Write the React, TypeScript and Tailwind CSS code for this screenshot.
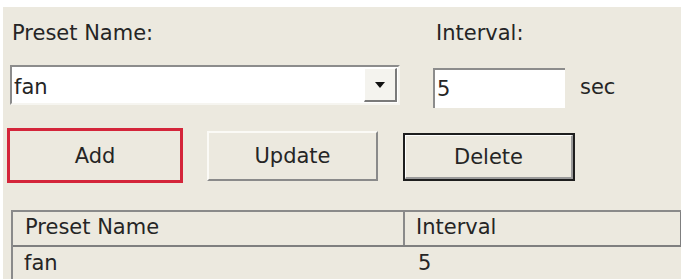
import { ReactNode } from "react";

const font = "font-['DejaVu_Sans',sans-serif] text-[21px] leading-[24px] text-[#252525]";

function Label({ children, className = "" }: { children: ReactNode; className?: string }) {
  return <div className={`${className}`}>{children}</div>;
}

export default function App() {
  return (
    <div className={`w-[687px] h-[279px] bg-white overflow-hidden ${font}`}>
      <div className="ml-[3px] mt-[7px] w-[678px] h-[272px] bg-[#ECE9DF] pl-[7px] overflow-hidden">
        {/* labels */}
        <div className="flex mt-[14px] h-[24px]">
          <Label className="w-[423px] pl-[2px]">Preset Name:</Label>
          <Label className="pl-[3px]">Interval:</Label>
        </div>

        {/* inputs */}
        <div className="flex items-start mt-[20px]">
          <div className="w-[390px] h-[40px] flex bg-white border-t-2 border-l-2 border-[#8c8c8c] border-b-2 border-r-2 border-b-[#f6f5f0] border-r-[#f6f5f0]">
            <div className="flex-1 pl-[2px] pt-[8px]">fan</div>
            <div className="w-[33px] h-[34px] mt-[1px] mr-[1px] flex items-center justify-center bg-[#f4f3ee] border-t border-l border-white border-r-2 border-b-2 border-r-[#7a7a7a] border-b-[#7a7a7a]">
              <svg width="10" height="6" viewBox="0 0 10 6">
                <path d="M0 0 L10 0 L5 6 Z" fill="#111" />
              </svg>
            </div>
          </div>
          <div className="ml-[33px] mt-[3px] w-[132px] h-[40px] bg-white border-t-2 border-l-2 border-[#8c8c8c] pl-[2px] pt-[7px]">
            5
          </div>
          <div className="ml-[15px] mt-[10px]">sec</div>
        </div>

        {/* buttons */}
        <div className="flex items-start mt-[20px] -ml-[3px]">
          <div className="w-[176px] h-[55px] border-[3px] border-[#d4253a] flex items-center justify-center">
            Add
          </div>
          <div className="ml-[24px] mt-[3px] w-[171px] h-[50px] flex items-center justify-center border-t-2 border-l-2 border-[#fbfaf6] border-r-2 border-b-2 border-r-[#8a8a8a] border-b-[#8a8a8a]">
            Update
          </div>
          <div className="ml-[25px] mt-[5px] w-[172px] h-[48px] border-2 border-[#1e1e1e] flex">
            <div className="flex-1 flex items-center justify-center border-r-2 border-b-2 border-[#9a9a9a] border-t border-l border-t-white border-l-white">
              Delete
            </div>
          </div>
        </div>

        {/* list */}
        <div className="mt-[27px] ml-[1px] w-[671px] border-t-2 border-l-2 border-[#8a8a8a]">
          <div className="flex h-[35px] border-b-2 border-[#7f7f7f]">
            <div className="w-[392px] pl-[12px] pt-[3px] border-r-2 border-[#8a8a8a]">Preset Name</div>
            <div className="flex-1 pl-[11px] pt-[3px] border-r-2 border-[#7f7f7f]">Interval</div>
          </div>
          <div className="flex h-[40px]">
            <div className="w-[394px] pl-[11px] pt-[4px]">fan</div>
            <div className="flex-1 pl-[11px] pt-[4px]">5</div>
          </div>
        </div>
      </div>
    </div>
  );
}
